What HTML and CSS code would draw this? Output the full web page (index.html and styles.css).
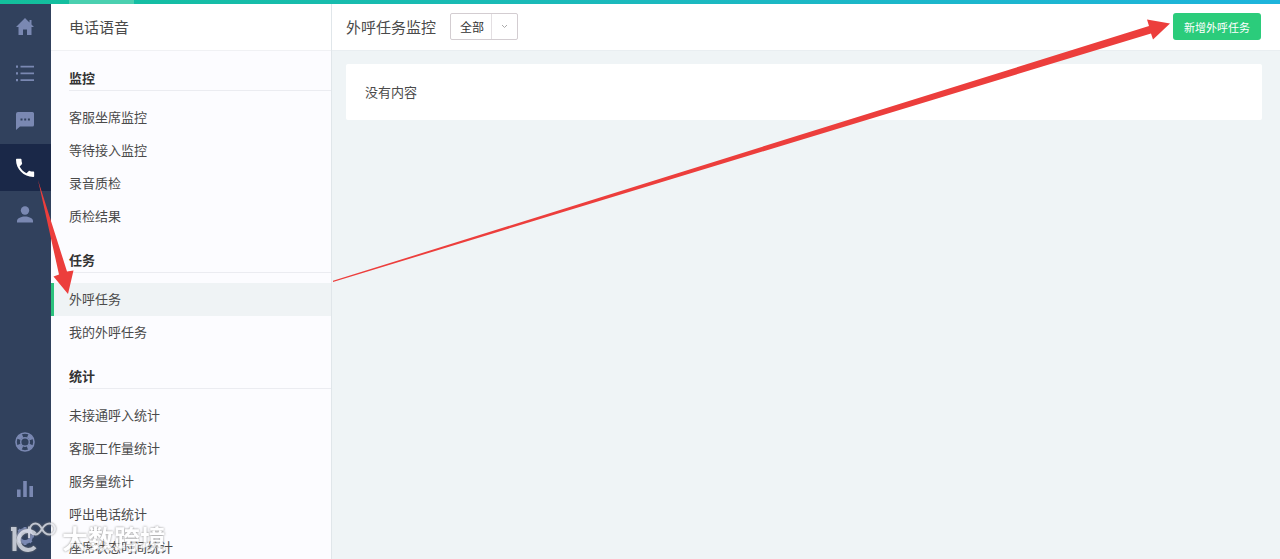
FILE: index.html
```html
<!DOCTYPE html>
<html lang="zh-CN">
<head>
<meta charset="utf-8">
<meta name="viewport" content="width=device-width, initial-scale=1">
<title>外呼任务监控</title>
<link rel="stylesheet" href="styles.css">
</head>
<body>
<div class="topbar"></div>
<div class="app">
  <nav class="rail" aria-label="主导航">
    <a class="rail-item" href="#" aria-label="首页"><svg class="icon" viewBox="0 0 20 20"><path d="M10 1 1 10h2.500v8h4.500v-5.500h4V18h4.500v-8H19l-2.500-2.500V3h-2v2.500z"/></svg></a>
    <a class="rail-item" href="#" aria-label="列表"><svg class="icon" viewBox="0 0 20 20"><path d="M1 1.500h2v2.300H1zm4.500.2H19v1.900H5.500zM1 8.200h2v2.300H1zm4.500.2H19v1.900H5.500zM1 15h2v2.300H1zm4.500.2H19v1.900H5.500z"/></svg></a>
    <a class="rail-item" href="#" aria-label="消息"><svg class="icon" viewBox="0 0 20 20"><path fill-rule="evenodd" d="M3 1h14.500Q19 1 19 2.500v11.500q0 1.500-1.500 1.500H5L1 19V3q0-2 2-2zm2.500 6.500v2h2v-2zm3.700 0v2h2v-2zm3.700 0v2h2v-2z"/></svg></a>
    <a class="rail-item rail-item-active" href="#" aria-label="电话"><svg class="icon" viewBox="0 0 24 24"><path d="M5.600 10.200c1.600 3.400 4.800 6.600 8.200 8.200l2.500-2.600c.4-.4.900-.5 1.300-.3 1.300.4 2.700.7 4.200.7.700 0 1.200.5 1.200 1.200v4.200c0 .7-.5 1.200-1.200 1.200C10.500 22.800 1.200 13.500 1.200 2.200 1.200 1.500 1.700 1 2.400 1h4.200c.7 0 1.200.5 1.200 1.200 0 1.500.2 2.900.7 4.200.1.400 0 .9-.3 1.200z"/></svg></a>
    <a class="rail-item" href="#" aria-label="客户"><svg class="icon" viewBox="0 0 20 20"><circle cx="10" cy="5.500" r="4.200"/><path d="M2 17.500v-1.500c0-3 4.500-4.500 8-4.500s8 1.500 8 4.500v1.500z"/></svg></a>
    <a class="rail-item rail-item-push" href="#" aria-label="帮助"><svg class="icon icon-line" viewBox="0 0 20 20"><circle cx="10" cy="10" r="9" stroke-width="1.600"/><circle cx="10" cy="10" r="4.300" stroke-width="1.400"/><circle cx="10" cy="10" r="6.800" stroke-width="4" stroke-dasharray="5.340 5.340" stroke-dashoffset="-2.670"/></svg></a>
    <a class="rail-item" href="#" aria-label="统计"><svg class="icon" viewBox="0 0 20 20"><path d="M2 10.500h3.600V18H2zM8.200 2h3.600v16H8.200zm6.200 5H18v11h-3.600z"/></svg></a>
    <a class="rail-item" href="#" aria-label="设置"><svg class="icon icon-line" viewBox="0 0 20 20"><circle cx="10" cy="10" r="6" stroke-width="4"/><path stroke-width="3" d="M10 1v3m0 12v3M1 10h3m12 0h3M3.600 3.600l2 2m8.800 8.800 2 2m0-12.800-2 2m-8.800 8.800-2 2"/></svg></a>
  </nav>

  <aside class="sidebar">
    <h1 class="sidebar-title">电话语音</h1>
    <section class="group">
      <h2 class="group-title">监控</h2>
      <a class="menu-item" href="#">客服坐席监控</a>
      <a class="menu-item" href="#">等待接入监控</a>
      <a class="menu-item" href="#">录音质检</a>
      <a class="menu-item" href="#">质检结果</a>
    </section>
    <section class="group">
      <h2 class="group-title">任务</h2>
      <a class="menu-item menu-item-active" href="#" aria-current="page">外呼任务</a>
      <a class="menu-item" href="#">我的外呼任务</a>
    </section>
    <section class="group">
      <h2 class="group-title">统计</h2>
      <a class="menu-item" href="#">未接通呼入统计</a>
      <a class="menu-item" href="#">客服工作量统计</a>
      <a class="menu-item" href="#">服务量统计</a>
      <a class="menu-item" href="#">呼出电话统计</a>
      <a class="menu-item" href="#">座席状态时间统计</a>
    </section>
  </aside>

  <main class="main">
    <header class="header">
      <label class="header-title" for="scope">外呼任务监控</label>
      <div class="picker">
        <select class="picker-select" id="scope"><option>全部</option></select>
        <span class="picker-arrow"><svg width="7" height="5" viewBox="0 0 7 5"><path d="M1 1l2.500 2.500L6 1"/></svg></span>
      </div>
      <button class="create" type="button">新增外呼任务</button>
    </header>
    <div class="card">没有内容</div>
  </main>
</div>

<svg class="arrow arrow-short" viewBox="0 0 80 300" aria-hidden="true"><path d="M38 180 67 271.500l6.500-1L68 294 53.500 276.500l5.500-2z"/></svg>
<svg class="arrow arrow-long" viewBox="0 0 1280 300" preserveAspectRatio="none" aria-hidden="true"><path d="M333 280.800 1149 26l-2-6.500 23 4L1153 39.500l-2-6L333 282z"/></svg>

<div class="watermark">
  <svg class="watermark-logo" width="48" height="34" viewBox="0 0 48 34" aria-hidden="true"><path d="M2 8h3.500v22M26 13a9.500 9.500 0 1 0 0 13"/><path class="thin" d="M20 17V5.500M33 8c-2-4-4-5.500-6.500-5.500a5.500 5.500 0 0 0 0 11c3 0 4.500-2 6.500-5.500S37 2.500 40.500 2.500a5.500 5.500 0 0 1 0 11c-3.500 0-5.500-1.500-7.500-5.500z"/></svg>
  <span class="watermark-text">大数跨境</span>
</div>
</body>
</html>
```
FILE: styles.css
```css
* {
  box-sizing: border-box;
}

body {
  margin: 0;
  height: 100vh;
  overflow: hidden;
  position: relative;
  background: #eff4f6;
  color: #4a4a4a;
  font: 13px/20px "Noto Sans CJK SC", sans-serif;
}

a {
  color: inherit;
  text-decoration: none;
}

.topbar {
  position: absolute;
  z-index: 1;
  top: 0;
  left: 0;
  width: 100%;
  height: 4px;
  background: linear-gradient(90deg, #13bf9c, #1bb9bd 50%, #1db4dc);
}

.topbar::after {
  content: "";
  display: block;
  width: 65px;
  height: 4px;
  margin-left: 69px;
  background: #4bd0b0;
}

.app {
  display: flex;
  height: 100%;
  padding-top: 3px;
}

.rail {
  display: flex;
  flex-direction: column;
  flex: none;
  width: 51px;
  background: #31415d;
}

.rail-item {
  display: flex;
  flex: none;
  align-items: center;
  justify-content: center;
  height: 47px;
  padding-right: 1px;
  color: #7a88b2;
}

.rail-item-active {
  background: #1a2848;
  color: #fff;
}

.rail-item-push {
  margin-top: auto;
}

.icon {
  width: 20px;
  height: 20px;
  fill: currentColor;
}

.icon-line {
  fill: none;
  stroke: currentColor;
}

.sidebar {
  flex: none;
  width: 281px;
  border-right: 1px solid #e0e6ea;
  background: #fcfcff;
}

.sidebar-title {
  height: 48px;
  margin: 0 0 12px;
  padding-left: 18px;
  border-bottom: 1px solid #f0f1f4;
  background: #fff;
  font-size: 15px;
  font-weight: 400;
  line-height: 48px;
}

.group {
  margin-bottom: 12px;
}

.group-title {
  height: 28px;
  margin: 0 0 10px 18px;
  padding-top: 2px;
  border-bottom: 1px solid #ebecf1;
  color: #333;
  font-size: 13px;
  font-weight: 700;
  line-height: 25px;
}

.menu-item {
  display: block;
  height: 33px;
  padding-left: 18px;
  line-height: 31px;
}

.menu-item-active {
  padding-left: 15px;
  border-left: 3px solid #2bc27d;
  background: #eff3f5;
}

.main {
  flex: 1;
  min-width: 0;
}

.header {
  display: flex;
  align-items: center;
  height: 48px;
  padding: 0 19px 0 14px;
  border-bottom: 1px solid #e9eef1;
  background: #fff;
}

.header-title {
  margin-right: 14px;
  font-size: 15px;
}

.picker {
  position: relative;
  width: 68px;
  height: 27px;
}

.picker-select {
  width: 100%;
  height: 100%;
  padding: 0 28px 0 9px;
  border: 1px solid #d3cdd1;
  border-radius: 2px;
  appearance: none;
  background: #fff;
  color: #333;
  font: 12px "Noto Sans CJK SC", sans-serif;
}

.picker-arrow {
  position: absolute;
  top: 1px;
  right: 1px;
  bottom: 1px;
  display: flex;
  align-items: center;
  justify-content: center;
  width: 26px;
  border-left: 1px solid #e3dfe2;
  pointer-events: none;
}

.picker-arrow svg {
  fill: none;
  stroke: #aaa;
}

.create {
  height: 27px;
  margin-left: auto;
  padding: 0 11px;
  border: 0;
  border-radius: 3px;
  background: #2bcc7b;
  color: #fff;
  font: 11px "Noto Sans CJK SC", sans-serif;
}

.card {
  margin: 13px 18px 0 14px;
  padding: 18px 19px;
  border-radius: 2px;
  background: #fff;
}

.arrow {
  position: absolute;
  z-index: 2;
  top: 0;
  left: 0;
  height: 300px;
  fill: #ec3e3c;
  pointer-events: none;
}

.arrow-short {
  width: 80px;
}

.arrow-long {
  width: 100%;
}

.watermark {
  position: absolute;
  z-index: 3;
  bottom: 4px;
  left: 9px;
  display: flex;
  align-items: center;
  gap: 5px;
  filter: drop-shadow(0 0 1px #777);
  opacity: 0.8;
  pointer-events: none;
}

.watermark-logo {
  fill: none;
  stroke: #e6e8ee;
  stroke-width: 4;
}

.watermark-logo .thin {
  stroke-width: 2;
}

.watermark-text {
  color: #fff;
  font-size: 26px;
  font-weight: 700;
  line-height: 34px;
}
```
